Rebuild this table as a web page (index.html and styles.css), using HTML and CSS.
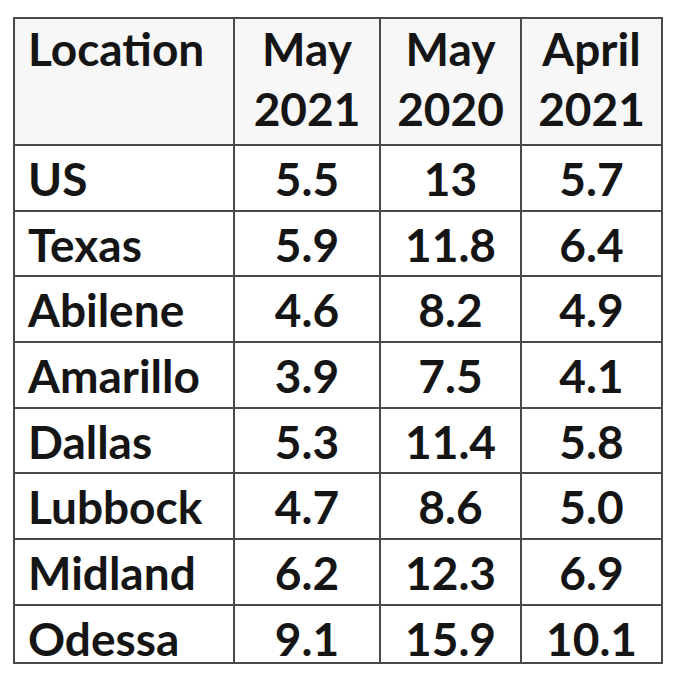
FILE: index.html
```html
<!DOCTYPE html>
<html lang="en">
<head>
<meta charset="utf-8">
<title>Unemployment rates</title>
<link rel="stylesheet" href="styles.css">
</head>
<body>
<table class="rates">
  <colgroup>
    <col class="c-loc">
    <col class="c-a">
    <col class="c-b">
    <col class="c-c">
  </colgroup>
  <thead>
    <tr class="head">
      <th class="loc">Location</th>
      <th>May<br>2021</th>
      <th>May<br>2020</th>
      <th>April<br>2021</th>
    </tr>
  </thead>
  <tbody>
    <tr><td class="loc">US</td><td>5.5</td><td>13</td><td>5.7</td></tr>
    <tr><td class="loc">Texas</td><td>5.9</td><td>11.8</td><td>6.4</td></tr>
    <tr><td class="loc">Abilene</td><td>4.6</td><td>8.2</td><td>4.9</td></tr>
    <tr><td class="loc">Amarillo</td><td>3.9</td><td>7.5</td><td>4.1</td></tr>
    <tr><td class="loc">Dallas</td><td>5.3</td><td>11.4</td><td>5.8</td></tr>
    <tr><td class="loc">Lubbock</td><td>4.7</td><td>8.6</td><td>5.0</td></tr>
    <tr><td class="loc">Midland</td><td>6.2</td><td>12.3</td><td>6.9</td></tr>
    <tr class="last"><td class="loc">Odessa</td><td>9.1</td><td>15.9</td><td>10.1</td></tr>
  </tbody>
</table>
</body>
</html>
```

FILE: styles.css
```css
html, body {
  margin: 0;
  padding: 0;
  background: #ffffff;
}

body {
  padding: 17px 0 0 13px;
  font-family: Lato, "Open Sans", sans-serif;
  font-weight: 700;
  color: #151515;
}

.rates {
  border-collapse: collapse;
  table-layout: fixed;
  width: 650px;
  border: 2px solid #4a4a4a;
}

.c-loc { width: 220px; }
.c-a { width: 146px; }
.c-b { width: 141px; }
.c-c { width: 141px; }

.rates th,
.rates td {
  border: 2px solid #4a4a4a;
  font-size: 46px;
  font-weight: 700;
  text-align: center;
  vertical-align: top;
  padding: 0;
  white-space: nowrap;
}

.rates .loc {
  text-align: left;
  padding-left: 13px;
}

.head th {
  background: #f7f7f7;
  height: 125px;
  line-height: 60px;
}

.rates tbody td {
  height: 65.7px;
  line-height: 56px;
  padding-top: 5px;
  box-sizing: border-box;
}

.rates tbody tr.last td {
  height: 57px;
  line-height: 46px;
  padding-top: 10px;
}
```
